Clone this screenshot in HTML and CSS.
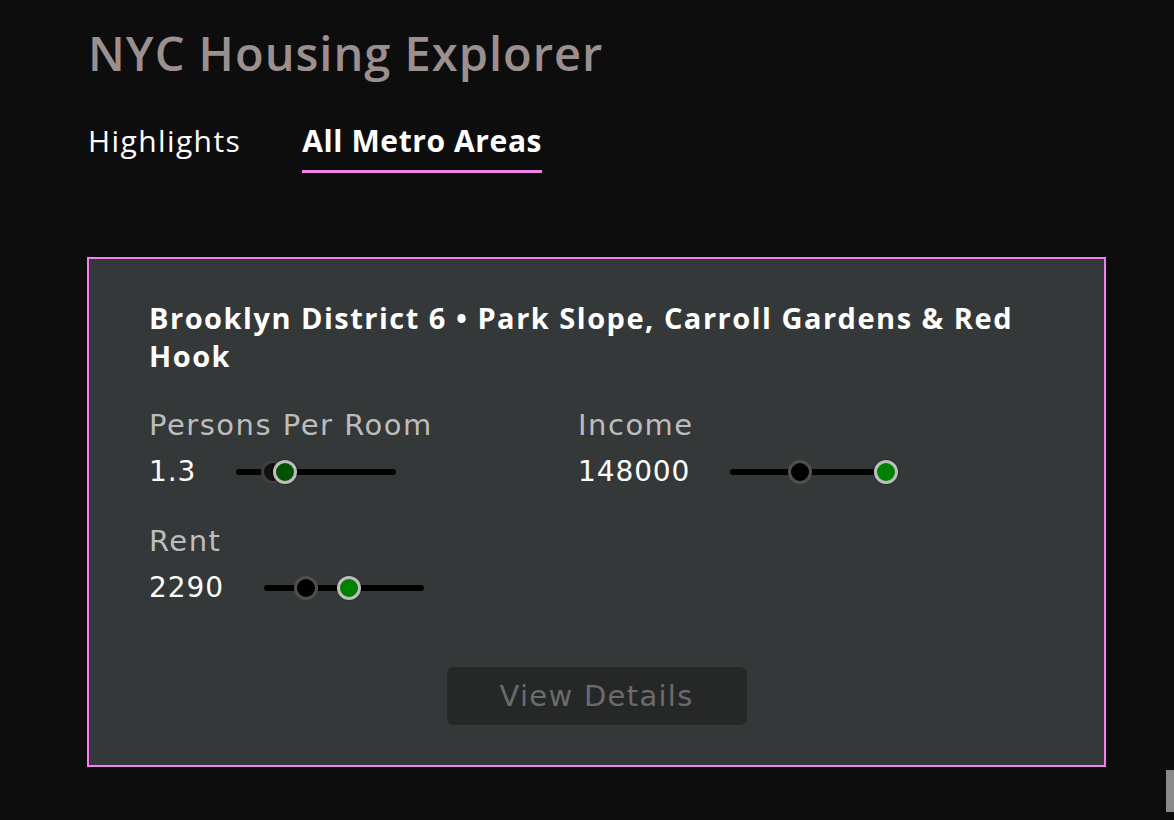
FILE: index.html
```html
<!DOCTYPE html>
<html lang="en">
<head>
<meta charset="utf-8">
<title>NYC Housing Explorer</title>
<link rel="stylesheet" href="styles.css">
</head>
<body>
<div class="page">
  <h1 class="app-title">NYC Housing Explorer</h1>
  <nav class="tabs">
    <div class="tab">Highlights</div>
    <div class="tab tab-active">All Metro Areas</div>
  </nav>
  <section class="card">
    <h2 class="card-title">Brooklyn District 6 • Park Slope, Carroll Gardens &amp; Red Hook</h2>
    <div class="fields">
      <div class="field">
        <div class="field-label">Persons Per Room</div>
        <div class="field-row">
          <span class="field-value">1.3</span>
          <div class="slider">
            <div class="thumb thumb-low thumb-dim" style="left:37px"></div>
            <div class="thumb thumb-high thumb-dark" style="left:49px"></div>
          </div>
        </div>
      </div>
      <div class="field">
        <div class="field-label">Income</div>
        <div class="field-row">
          <span class="field-value">148000</span>
          <div class="slider">
            <div class="thumb thumb-low" style="left:70px"></div>
            <div class="thumb thumb-high" style="left:156px"></div>
          </div>
        </div>
      </div>
      <div class="field">
        <div class="field-label">Rent</div>
        <div class="field-row">
          <span class="field-value">2290</span>
          <div class="slider">
            <div class="thumb thumb-low" style="left:42px"></div>
            <div class="thumb thumb-high" style="left:85px"></div>
          </div>
        </div>
      </div>
    </div>
    <div class="actions">
      <button class="btn-details" type="button">View Details</button>
    </div>
  </section>
</div>
<div class="scroll-thumb"></div>
</body>
</html>
```
FILE: styles.css
```css
html, body {
  margin: 0;
  padding: 0;
  background: #0d0d0d;
  height: 100%;
  overflow: hidden;
}
.page {
  padding: 25px 0 0 87px;
  width: 1019px;
  font-family: "Open Sans", "Noto Sans", sans-serif;
}
.app-title {
  margin: 0 0 0 1px;
  font-size: 47px;
  line-height: 56px;
  font-weight: 600;
  letter-spacing: 1px;
  color: #9b8f8f;
}
.tabs {
  display: flex;
  gap: 61px;
  margin: 40px 0 0 1px;
}
.tab {
  font-size: 30px;
  line-height: 40px;
  color: #ffffff;
  letter-spacing: 1.4px;
  padding-bottom: 9px;
  border-bottom: 3px solid transparent;
}
.tab-active {
  font-weight: 700;
  letter-spacing: 0.6px;
  border-bottom-color: #f082e8;
}
.card {
  margin-top: 84px;
  border: 2px solid #ee82ee;
  background: #353839;
  padding: 40px 60px 40px 60px;
}
.card-title {
  margin: 0;
  font-size: 29px;
  line-height: 38px;
  font-weight: 700;
  letter-spacing: 1.5px;
  color: #ffffff;
}
.fields {
  display: grid;
  grid-template-columns: 429px 1fr;
  row-gap: 31px;
  margin-top: 32px;
  font-family: "DejaVu Sans", "Noto Sans", sans-serif;
}
.field-label {
  font-size: 29px;
  line-height: 36px;
  letter-spacing: 1.5px;
  color: #bdbdbd;
}
.field-row {
  display: flex;
  align-items: center;
  gap: 40px;
  height: 40px;
  margin-top: 9px;
}
.field-value {
  font-size: 28px;
  line-height: 40px;
  letter-spacing: 0.9px;
  color: #ffffff;
}
.slider {
  position: relative;
  width: 160px;
  height: 6px;
  border-radius: 3px;
  background: #000000;
}
.thumb {
  position: absolute;
  top: 50%;
  width: 18px;
  height: 18px;
  margin: -12px 0 0 -12px;
  border-radius: 50%;
  border: 3px solid #4f4f4f;
  background: #000000;
}
.thumb-high {
  border-color: #bdbdbd;
  background: #008000;
  box-shadow: 0 0 2px rgba(0,0,0,0.5);
}
.thumb-dark {
  background: #005200;
}
.thumb-dim {
  border-color: #3e3e3e;
  background: #111;
}
.actions {
  display: flex;
  justify-content: center;
  margin-top: 59px;
}
.btn-details {
  width: 300px;
  height: 58px;
  border: none;
  border-radius: 7px;
  background: #262828;
  color: #6b6b6b;
  font-family: "DejaVu Sans", "Noto Sans", sans-serif;
  font-size: 29px;
  letter-spacing: 1.3px;
  padding: 0;
}
.scroll-thumb {
  position: fixed;
  right: 0;
  top: 770px;
  width: 8px;
  height: 42px;
  background: #8a8a8a;
}
```
